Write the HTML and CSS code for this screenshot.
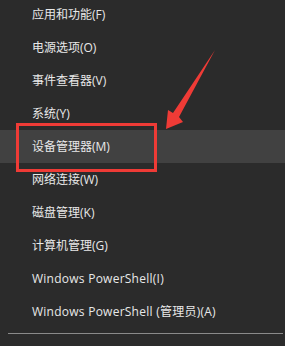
FILE: index.html
```html
<!DOCTYPE html>
<html lang="zh-CN">
<head>
<meta charset="utf-8">
<link rel="stylesheet" href="styles.css">
</head>
<body>
<div class="screen">
  <ul class="menu">
    <li class="item">应用和功能(F)</li>
    <li class="item">电源选项(O)</li>
    <li class="item">事件查看器(V)</li>
    <li class="item">系统(Y)</li>
    <li class="item active">设备管理器(M)</li>
    <li class="item">网络连接(W)</li>
    <li class="item">磁盘管理(K)</li>
    <li class="item">计算机管理(G)</li>
    <li class="item latin">Windows PowerShell(I)</li>
    <li class="item latin">Windows PowerShell (管理员)(A)</li>
  </ul>
  <div class="separator"></div>
  <div class="highlight-box"></div>
  <svg class="arrow" width="285" height="346" viewBox="0 0 285 346">
    <polygon points="215,50 179,117 183,122 166,129 168,110 173,113" fill="#ef3b36"/>
  </svg>
</div>
</body>
</html>
```
FILE: styles.css
```css
html, body {
  margin: 0;
  padding: 0;
  background: #2b2b2b;
}
.screen {
  position: relative;
  width: 285px;
  height: 346px;
  overflow: hidden;
  background: #2b2b2b;
  font-family: "Open Sans", "Noto Sans CJK SC", sans-serif;
  font-size: 12px;
  color: #e8e8e8;
}
.menu {
  list-style: none;
  margin: -2px 0 0 0;
  padding: 0;
}
.item {
  height: 33px;
  line-height: 33px;
  padding-left: 32px;
  white-space: nowrap;
}
.item.latin {
  letter-spacing: 0.25px;
}
.item.active {
  background: #414141;
}
.separator {
  height: 1px;
  background: #8a8a8a;
  margin: 5px 2px 0 8px;
}
.highlight-box {
  position: absolute;
  left: 16px;
  top: 123px;
  width: 135px;
  height: 43px;
  border: 3px solid #ef3b36;
}
.arrow {
  position: absolute;
  left: 0;
  top: 0;
}
```
